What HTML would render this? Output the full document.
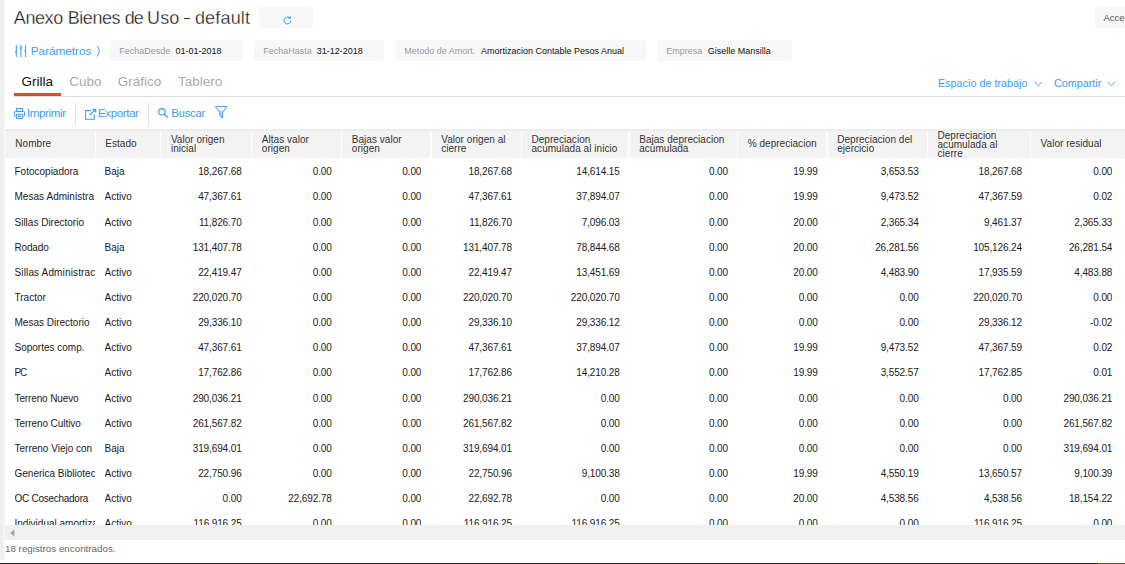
<!DOCTYPE html><html><head><meta charset="utf-8"><title>Anexo Bienes de Uso</title><style>
*{box-sizing:border-box;margin:0;padding:0}
html,body{width:1125px;height:564px;overflow:hidden;background:#fff}
body{font-family:"Liberation Sans",sans-serif;position:relative;color:#222}
.abs{position:absolute;white-space:nowrap}
.strip{left:0;top:0;width:5px;height:560px;background:#f4f4f4}
.strip2{left:0;top:0;width:2.5px;height:560px;background:#eeeeee}
.title{left:14px;top:7px;font-size:18px;line-height:22px;color:#111;-webkit-text-stroke:0.32px #fff}
.chip{background:#f8f8f8;border-radius:3px;top:40px;height:21px}
.lbl{font-size:9px;line-height:21px;top:40.5px;color:#999}
.val{font-size:9px;line-height:21px;top:40.5px;color:#111}
.blue{color:#3d9cf2}
.tab{font-size:13.5px;line-height:16px;top:74px;color:#aaa}
.hd{top:131px;height:27px;background:#f3f3f3}
.ht{font-size:10px;line-height:9px;color:#333;letter-spacing:0.04px}
.c{font-size:10px;line-height:25.2px;height:25.2px;color:#1a1a1a;letter-spacing:-0.12px;overflow:hidden}
.n{text-align:right}
.tb{font-size:11.5px;line-height:14px;top:105.8px;color:#3d9cf2;letter-spacing:-0.35px}
</style></head><body>
<div class="abs strip"></div><div class="abs strip2"></div>
<div class="abs" style="left:5px;top:129px;width:1px;height:396px;background:#f8f8f8"></div>
<div class="abs title" style="left:13.8px;letter-spacing:-0.4px">Anexo</div>
<div class="abs title" style="left:67.8px;letter-spacing:-0.47px">Bienes</div>
<div class="abs title" style="left:124.7px;letter-spacing:-1.0px">de</div>
<div class="abs title" style="left:147.1px;letter-spacing:0.1px">Uso</div>
<div class="abs title" style="left:194.9px;letter-spacing:0.18px">default</div>
<div class="abs" style="left:184.4px;top:17.9px;width:5.7px;height:1.3px;background:#3a3a3a"></div>
<div class="abs" style="left:259px;top:7.4px;width:54px;height:20.6px;background:#f8f8f8;border-radius:3px"></div>
<svg class="abs" style="left:283px;top:15.3px" width="10" height="10" viewBox="0 0 10 10"><path d="M6.6 2.9 A3.4 3.4 0 1 0 7.8 5.6" fill="none" stroke="#3d9cf2" stroke-width="1"/><path d="M4.9 3.6 L7.9 3.9 L7.6 0.6 Z" fill="#3d9cf2"/></svg>
<div class="abs" style="left:1095px;top:7px;width:40px;height:21px;background:#f8f8f8;border-radius:3px"></div>
<div class="abs" style="left:1103.5px;top:7px;font-size:9.5px;line-height:21px;color:#555">Acce</div>
<svg class="abs" style="left:15px;top:44.7px" width="12" height="12" viewBox="0 0 12 12" fill="none" stroke="#3d9cf2" stroke-width="1.1"><path d="M1.3 0V12M5.9 0V12M10.6 0V12" stroke-width="1"/><circle cx="1" cy="7" r="0.9" fill="#3d9cf2" stroke="none"/><circle cx="5.9" cy="3" r="1.1" fill="#3d9cf2" stroke="none"/><circle cx="10.2" cy="5.6" r="0.9" fill="#3d9cf2" stroke="none"/></svg>
<div class="abs blue" style="left:30.8px;top:43px;font-size:11.8px;line-height:16px;letter-spacing:-0.05px">Parámetros</div>
<svg class="abs" style="left:96px;top:45px" width="6" height="12" viewBox="0 0 6 12" fill="none" stroke="#3d9cf2" stroke-width="1"><path d="M1 0.8 Q5.4 6 1 11.4"/></svg>
<div class="abs chip" style="left:110px;width:133.3px"></div>
<div class="abs lbl" style="left:119.2px">FechaDesde</div>
<div class="abs val" style="left:175.5px">01-01-2018</div>
<div class="abs chip" style="left:254px;width:130px"></div>
<div class="abs lbl" style="left:263.2px">FechaHasta</div>
<div class="abs val" style="left:316.8px">31-12-2018</div>
<div class="abs chip" style="left:395px;width:251px"></div>
<div class="abs lbl" style="left:404.2px">Metodo de Amort.</div>
<div class="abs val" style="left:480.9px">Amortizacion Contable Pesos Anual</div>
<div class="abs chip" style="left:657px;width:135px"></div>
<div class="abs lbl" style="left:666.3px">Empresa</div>
<div class="abs val" style="left:707.7px">Giselle Mansilla</div>
<div class="abs tab" style="left:21.5px;color:#111">Grilla</div>
<div class="abs tab" style="left:69.3px">Cubo</div>
<div class="abs tab" style="left:117.8px">Gráfico</div>
<div class="abs tab" style="left:178px">Tablero</div>
<div class="abs" style="left:14px;top:96px;width:1111px;height:1px;background:#dcdcdc"></div>
<div class="abs" style="left:14px;top:93px;width:47px;height:3px;background:#e04a32"></div>
<div class="abs blue" style="left:938px;top:76px;font-size:10.8px;line-height:14px">Espacio de trabajo</div>
<svg class="abs" style="left:1034px;top:81px" width="9" height="6" viewBox="0 0 9 6" fill="none" stroke="#3d9cf2" stroke-width="0.9"><path d="M0.5 0.8 L4.3 4.8 L8.1 0.8"/></svg>
<div class="abs blue" style="left:1053.9px;top:76px;font-size:10.8px;line-height:14px">Compartir</div>
<svg class="abs" style="left:1107px;top:81px" width="9" height="6" viewBox="0 0 9 6" fill="none" stroke="#3d9cf2" stroke-width="0.9"><path d="M0.5 0.8 L4.3 4.8 L8.1 0.8"/></svg>
<svg class="abs" style="left:14px;top:108px" width="11" height="11" viewBox="0 0 11 11" fill="none" stroke="#3d9cf2" stroke-width="1"><rect x="2.5" y="0.5" width="6" height="3"/><rect x="0.5" y="3.3" width="10" height="4.9" rx="1"/><rect x="2.6" y="6.2" width="5.8" height="4.2" fill="#fff"/><rect x="4.1" y="7.6" width="2.8" height="1.5" fill="#3d9cf2" stroke="none"/></svg>
<div class="abs tb" style="left:27px">Imprimir</div>
<div class="abs" style="left:75px;top:103px;width:1px;height:22px;background:#e3e3e3"></div>
<svg class="abs" style="left:85px;top:107.7px" width="12" height="12" viewBox="0 0 12 12" fill="none" stroke="#3d9cf2" stroke-width="1.05"><path d="M5.8 2.6H0.55V11.3H9.3V6.2" stroke-linejoin="miter"/><path d="M4.8 7 L9.8 2" stroke-width="1.2"/><path d="M7 0.7H11.2V4.9Z" fill="#3d9cf2" stroke="none"/></svg>
<div class="abs tb" style="left:98px">Exportar</div>
<div class="abs" style="left:148px;top:103px;width:1px;height:22px;background:#e3e3e3"></div>
<svg class="abs" style="left:158px;top:108px" width="11" height="11" viewBox="0 0 11 11" fill="none" stroke="#3d9cf2" stroke-width="1.15"><circle cx="3.9" cy="3.8" r="3.15"/><path d="M6.2 6.1 L9.6 9.5" stroke-width="1.4"/></svg>
<div class="abs tb" style="left:171.3px">Buscar</div>
<svg class="abs" style="left:214px;top:106px" width="14" height="13" viewBox="0 0 14 13" fill="none" stroke="#3d9cf2" stroke-width="1"><path d="M4.4 4.6H9.8L8.6 6.3V12L5.7 9.6V6.3Z" fill="#b3d7f9" stroke="none"/><path d="M1.3 0.6H12.9L8.6 6.2V12L5.7 9.6V6.2Z" stroke-linejoin="round"/></svg>
<div class="abs" style="left:6px;top:129px;width:1119px;height:2px;background:#eaecee"></div>
<div class="abs" style="left:6px;top:130.5px;width:1119px;height:27.5px;background:#f3f3f3"></div>
<div class="abs" style="left:1121.5px;top:158px;width:4px;height:0.8px;background:#f3f3f3"></div>
<div class="abs ht" style="left:15.3px;top:129.5px;height:27.5px;display:flex;align-items:center"><div>Nombre</div></div>
<div class="abs" style="left:95.3px;top:131px;width:1.2px;height:27px;background:#fdfdfd"></div>
<div class="abs ht" style="left:105.3px;top:129.5px;height:27.5px;display:flex;align-items:center"><div>Estado</div></div>
<div class="abs" style="left:160.10000000000002px;top:131px;width:1.2px;height:27px;background:#fdfdfd"></div>
<div class="abs ht" style="left:170.90000000000003px;top:130.4px;height:27.5px;display:flex;align-items:center"><div>Valor origen<br>inicial</div></div>
<div class="abs" style="left:251.0px;top:131px;width:1.2px;height:27px;background:#fdfdfd"></div>
<div class="abs ht" style="left:261.8px;top:130.4px;height:27.5px;display:flex;align-items:center"><div>Altas valor<br>origen</div></div>
<div class="abs" style="left:341.0px;top:131px;width:1.2px;height:27px;background:#fdfdfd"></div>
<div class="abs ht" style="left:351.8px;top:130.4px;height:27.5px;display:flex;align-items:center"><div>Bajas valor<br>origen</div></div>
<div class="abs" style="left:430.40000000000003px;top:131px;width:1.2px;height:27px;background:#fdfdfd"></div>
<div class="abs ht" style="left:441.20000000000005px;top:130.4px;height:27.5px;display:flex;align-items:center"><div>Valor origen al<br>cierre</div></div>
<div class="abs" style="left:520.6999999999999px;top:131px;width:1.2px;height:27px;background:#fdfdfd"></div>
<div class="abs ht" style="left:531.4999999999999px;top:130.4px;height:27.5px;display:flex;align-items:center"><div>Depreciacion<br>acumulada al inicio</div></div>
<div class="abs" style="left:628.4px;top:131px;width:1.2px;height:27px;background:#fdfdfd"></div>
<div class="abs ht" style="left:639.1999999999999px;top:130.4px;height:27.5px;display:flex;align-items:center"><div>Bajas depreciacion<br>acumulada</div></div>
<div class="abs" style="left:736.9px;top:131px;width:1.2px;height:27px;background:#fdfdfd"></div>
<div class="abs ht" style="left:747.6999999999999px;top:129.5px;height:27.5px;display:flex;align-items:center"><div>% depreciacion</div></div>
<div class="abs" style="left:826.4px;top:131px;width:1.2px;height:27px;background:#fdfdfd"></div>
<div class="abs ht" style="left:837.1999999999999px;top:130.4px;height:27.5px;display:flex;align-items:center"><div>Depreciacion del<br>ejercicio</div></div>
<div class="abs" style="left:926.6999999999999px;top:131px;width:1.2px;height:27px;background:#fdfdfd"></div>
<div class="abs ht" style="left:937.4999999999999px;top:130.4px;height:27.5px;display:flex;align-items:center"><div>Depreciacion<br>acumulada al<br>cierre</div></div>
<div class="abs" style="left:1029.8px;top:131px;width:1.2px;height:27px;background:#fdfdfd"></div>
<div class="abs ht" style="left:1040.6px;top:129.5px;height:27.5px;display:flex;align-items:center"><div>Valor residual</div></div>
<div class="abs" style="left:6px;top:159.2px;width:1119px;height:365.8px;overflow:hidden">
<div class="abs c" style="letter-spacing:0px;left:8.5px;top:0.00px;width:80.1px">Fotocopiadora</div>
<div class="abs c" style="letter-spacing:0px;left:98.5px;top:0.00px;width:54.90000000000001px">Baja</div>
<div class="abs c n" style="left:154.8px;top:0.00px;width:80.8px">18,267.68</div>
<div class="abs c n" style="left:245.7px;top:0.00px;width:80.0px">0.00</div>
<div class="abs c n" style="left:335.7px;top:0.00px;width:79.6px">0.00</div>
<div class="abs c n" style="left:425.1px;top:0.00px;width:80.8px">18,267.68</div>
<div class="abs c n" style="left:515.4px;top:0.00px;width:98.3px">14,614.15</div>
<div class="abs c n" style="left:623.1px;top:0.00px;width:98.8px">0.00</div>
<div class="abs c n" style="left:731.6px;top:0.00px;width:80.1px">19.99</div>
<div class="abs c n" style="left:821.1px;top:0.00px;width:91.5px">3,653.53</div>
<div class="abs c n" style="left:921.4px;top:0.00px;width:94.6px">18,267.68</div>
<div class="abs c n" style="left:1024.5px;top:0.00px;width:81.8px">0.00</div>
<div class="abs c" style="letter-spacing:0.04px;left:8.5px;top:25.16px;width:80.1px">Mesas Administra</div>
<div class="abs c" style="letter-spacing:0px;left:98.5px;top:25.16px;width:54.90000000000001px">Activo</div>
<div class="abs c n" style="left:154.8px;top:25.16px;width:80.8px">47,367.61</div>
<div class="abs c n" style="left:245.7px;top:25.16px;width:80.0px">0.00</div>
<div class="abs c n" style="left:335.7px;top:25.16px;width:79.6px">0.00</div>
<div class="abs c n" style="left:425.1px;top:25.16px;width:80.8px">47,367.61</div>
<div class="abs c n" style="left:515.4px;top:25.16px;width:98.3px">37,894.07</div>
<div class="abs c n" style="left:623.1px;top:25.16px;width:98.8px">0.00</div>
<div class="abs c n" style="left:731.6px;top:25.16px;width:80.1px">19.99</div>
<div class="abs c n" style="left:821.1px;top:25.16px;width:91.5px">9,473.52</div>
<div class="abs c n" style="left:921.4px;top:25.16px;width:94.6px">47,367.59</div>
<div class="abs c n" style="left:1024.5px;top:25.16px;width:81.8px">0.02</div>
<div class="abs c" style="letter-spacing:0px;left:8.5px;top:50.32px;width:80.1px">Sillas Directorio</div>
<div class="abs c" style="letter-spacing:0px;left:98.5px;top:50.32px;width:54.90000000000001px">Activo</div>
<div class="abs c n" style="left:154.8px;top:50.32px;width:80.8px">11,826.70</div>
<div class="abs c n" style="left:245.7px;top:50.32px;width:80.0px">0.00</div>
<div class="abs c n" style="left:335.7px;top:50.32px;width:79.6px">0.00</div>
<div class="abs c n" style="left:425.1px;top:50.32px;width:80.8px">11,826.70</div>
<div class="abs c n" style="left:515.4px;top:50.32px;width:98.3px">7,096.03</div>
<div class="abs c n" style="left:623.1px;top:50.32px;width:98.8px">0.00</div>
<div class="abs c n" style="left:731.6px;top:50.32px;width:80.1px">20.00</div>
<div class="abs c n" style="left:821.1px;top:50.32px;width:91.5px">2,365.34</div>
<div class="abs c n" style="left:921.4px;top:50.32px;width:94.6px">9,461.37</div>
<div class="abs c n" style="left:1024.5px;top:50.32px;width:81.8px">2,365.33</div>
<div class="abs c" style="letter-spacing:-0.16px;left:8.5px;top:75.48px;width:80.1px">Rodado</div>
<div class="abs c" style="letter-spacing:0px;left:98.5px;top:75.48px;width:54.90000000000001px">Baja</div>
<div class="abs c n" style="left:154.8px;top:75.48px;width:80.8px">131,407.78</div>
<div class="abs c n" style="left:245.7px;top:75.48px;width:80.0px">0.00</div>
<div class="abs c n" style="left:335.7px;top:75.48px;width:79.6px">0.00</div>
<div class="abs c n" style="left:425.1px;top:75.48px;width:80.8px">131,407.78</div>
<div class="abs c n" style="left:515.4px;top:75.48px;width:98.3px">78,844.68</div>
<div class="abs c n" style="left:623.1px;top:75.48px;width:98.8px">0.00</div>
<div class="abs c n" style="left:731.6px;top:75.48px;width:80.1px">20.00</div>
<div class="abs c n" style="left:821.1px;top:75.48px;width:91.5px">26,281.56</div>
<div class="abs c n" style="left:921.4px;top:75.48px;width:94.6px">105,126.24</div>
<div class="abs c n" style="left:1024.5px;top:75.48px;width:81.8px">26,281.54</div>
<div class="abs c" style="letter-spacing:0.14px;left:8.5px;top:100.64px;width:80.1px">Sillas Administrac</div>
<div class="abs c" style="letter-spacing:0px;left:98.5px;top:100.64px;width:54.90000000000001px">Activo</div>
<div class="abs c n" style="left:154.8px;top:100.64px;width:80.8px">22,419.47</div>
<div class="abs c n" style="left:245.7px;top:100.64px;width:80.0px">0.00</div>
<div class="abs c n" style="left:335.7px;top:100.64px;width:79.6px">0.00</div>
<div class="abs c n" style="left:425.1px;top:100.64px;width:80.8px">22,419.47</div>
<div class="abs c n" style="left:515.4px;top:100.64px;width:98.3px">13,451.69</div>
<div class="abs c n" style="left:623.1px;top:100.64px;width:98.8px">0.00</div>
<div class="abs c n" style="left:731.6px;top:100.64px;width:80.1px">20.00</div>
<div class="abs c n" style="left:821.1px;top:100.64px;width:91.5px">4,483.90</div>
<div class="abs c n" style="left:921.4px;top:100.64px;width:94.6px">17,935.59</div>
<div class="abs c n" style="left:1024.5px;top:100.64px;width:81.8px">4,483.88</div>
<div class="abs c" style="letter-spacing:0px;left:8.5px;top:125.80px;width:80.1px">Tractor</div>
<div class="abs c" style="letter-spacing:0px;left:98.5px;top:125.80px;width:54.90000000000001px">Activo</div>
<div class="abs c n" style="left:154.8px;top:125.80px;width:80.8px">220,020.70</div>
<div class="abs c n" style="left:245.7px;top:125.80px;width:80.0px">0.00</div>
<div class="abs c n" style="left:335.7px;top:125.80px;width:79.6px">0.00</div>
<div class="abs c n" style="left:425.1px;top:125.80px;width:80.8px">220,020.70</div>
<div class="abs c n" style="left:515.4px;top:125.80px;width:98.3px">220,020.70</div>
<div class="abs c n" style="left:623.1px;top:125.80px;width:98.8px">0.00</div>
<div class="abs c n" style="left:731.6px;top:125.80px;width:80.1px">0.00</div>
<div class="abs c n" style="left:821.1px;top:125.80px;width:91.5px">0.00</div>
<div class="abs c n" style="left:921.4px;top:125.80px;width:94.6px">220,020.70</div>
<div class="abs c n" style="left:1024.5px;top:125.80px;width:81.8px">0.00</div>
<div class="abs c" style="letter-spacing:0px;left:8.5px;top:150.96px;width:80.1px">Mesas Directorio</div>
<div class="abs c" style="letter-spacing:0px;left:98.5px;top:150.96px;width:54.90000000000001px">Activo</div>
<div class="abs c n" style="left:154.8px;top:150.96px;width:80.8px">29,336.10</div>
<div class="abs c n" style="left:245.7px;top:150.96px;width:80.0px">0.00</div>
<div class="abs c n" style="left:335.7px;top:150.96px;width:79.6px">0.00</div>
<div class="abs c n" style="left:425.1px;top:150.96px;width:80.8px">29,336.10</div>
<div class="abs c n" style="left:515.4px;top:150.96px;width:98.3px">29,336.12</div>
<div class="abs c n" style="left:623.1px;top:150.96px;width:98.8px">0.00</div>
<div class="abs c n" style="left:731.6px;top:150.96px;width:80.1px">0.00</div>
<div class="abs c n" style="left:821.1px;top:150.96px;width:91.5px">0.00</div>
<div class="abs c n" style="left:921.4px;top:150.96px;width:94.6px">29,336.12</div>
<div class="abs c n" style="left:1024.5px;top:150.96px;width:81.8px">-0.02</div>
<div class="abs c" style="letter-spacing:0px;left:8.5px;top:176.12px;width:80.1px">Soportes comp.</div>
<div class="abs c" style="letter-spacing:0px;left:98.5px;top:176.12px;width:54.90000000000001px">Activo</div>
<div class="abs c n" style="left:154.8px;top:176.12px;width:80.8px">47,367.61</div>
<div class="abs c n" style="left:245.7px;top:176.12px;width:80.0px">0.00</div>
<div class="abs c n" style="left:335.7px;top:176.12px;width:79.6px">0.00</div>
<div class="abs c n" style="left:425.1px;top:176.12px;width:80.8px">47,367.61</div>
<div class="abs c n" style="left:515.4px;top:176.12px;width:98.3px">37,894.07</div>
<div class="abs c n" style="left:623.1px;top:176.12px;width:98.8px">0.00</div>
<div class="abs c n" style="left:731.6px;top:176.12px;width:80.1px">19.99</div>
<div class="abs c n" style="left:821.1px;top:176.12px;width:91.5px">9,473.52</div>
<div class="abs c n" style="left:921.4px;top:176.12px;width:94.6px">47,367.59</div>
<div class="abs c n" style="left:1024.5px;top:176.12px;width:81.8px">0.02</div>
<div class="abs c" style="letter-spacing:-1.2px;left:8.5px;top:201.28px;width:80.1px">PC</div>
<div class="abs c" style="letter-spacing:0px;left:98.5px;top:201.28px;width:54.90000000000001px">Activo</div>
<div class="abs c n" style="left:154.8px;top:201.28px;width:80.8px">17,762.86</div>
<div class="abs c n" style="left:245.7px;top:201.28px;width:80.0px">0.00</div>
<div class="abs c n" style="left:335.7px;top:201.28px;width:79.6px">0.00</div>
<div class="abs c n" style="left:425.1px;top:201.28px;width:80.8px">17,762.86</div>
<div class="abs c n" style="left:515.4px;top:201.28px;width:98.3px">14,210.28</div>
<div class="abs c n" style="left:623.1px;top:201.28px;width:98.8px">0.00</div>
<div class="abs c n" style="left:731.6px;top:201.28px;width:80.1px">19.99</div>
<div class="abs c n" style="left:821.1px;top:201.28px;width:91.5px">3,552.57</div>
<div class="abs c n" style="left:921.4px;top:201.28px;width:94.6px">17,762.85</div>
<div class="abs c n" style="left:1024.5px;top:201.28px;width:81.8px">0.01</div>
<div class="abs c" style="letter-spacing:-0.12px;left:8.5px;top:226.44px;width:80.1px">Terreno Nuevo</div>
<div class="abs c" style="letter-spacing:0px;left:98.5px;top:226.44px;width:54.90000000000001px">Activo</div>
<div class="abs c n" style="left:154.8px;top:226.44px;width:80.8px">290,036.21</div>
<div class="abs c n" style="left:245.7px;top:226.44px;width:80.0px">0.00</div>
<div class="abs c n" style="left:335.7px;top:226.44px;width:79.6px">0.00</div>
<div class="abs c n" style="left:425.1px;top:226.44px;width:80.8px">290,036.21</div>
<div class="abs c n" style="left:515.4px;top:226.44px;width:98.3px">0.00</div>
<div class="abs c n" style="left:623.1px;top:226.44px;width:98.8px">0.00</div>
<div class="abs c n" style="left:731.6px;top:226.44px;width:80.1px">0.00</div>
<div class="abs c n" style="left:821.1px;top:226.44px;width:91.5px">0.00</div>
<div class="abs c n" style="left:921.4px;top:226.44px;width:94.6px">0.00</div>
<div class="abs c n" style="left:1024.5px;top:226.44px;width:81.8px">290,036.21</div>
<div class="abs c" style="letter-spacing:-0.07px;left:8.5px;top:251.60px;width:80.1px">Terreno Cultivo</div>
<div class="abs c" style="letter-spacing:0px;left:98.5px;top:251.60px;width:54.90000000000001px">Activo</div>
<div class="abs c n" style="left:154.8px;top:251.60px;width:80.8px">261,567.82</div>
<div class="abs c n" style="left:245.7px;top:251.60px;width:80.0px">0.00</div>
<div class="abs c n" style="left:335.7px;top:251.60px;width:79.6px">0.00</div>
<div class="abs c n" style="left:425.1px;top:251.60px;width:80.8px">261,567.82</div>
<div class="abs c n" style="left:515.4px;top:251.60px;width:98.3px">0.00</div>
<div class="abs c n" style="left:623.1px;top:251.60px;width:98.8px">0.00</div>
<div class="abs c n" style="left:731.6px;top:251.60px;width:80.1px">0.00</div>
<div class="abs c n" style="left:821.1px;top:251.60px;width:91.5px">0.00</div>
<div class="abs c n" style="left:921.4px;top:251.60px;width:94.6px">0.00</div>
<div class="abs c n" style="left:1024.5px;top:251.60px;width:81.8px">261,567.82</div>
<div class="abs c" style="letter-spacing:0px;left:8.5px;top:276.76px;width:80.1px">Terreno Viejo con c</div>
<div class="abs c" style="letter-spacing:0px;left:98.5px;top:276.76px;width:54.90000000000001px">Baja</div>
<div class="abs c n" style="left:154.8px;top:276.76px;width:80.8px">319,694.01</div>
<div class="abs c n" style="left:245.7px;top:276.76px;width:80.0px">0.00</div>
<div class="abs c n" style="left:335.7px;top:276.76px;width:79.6px">0.00</div>
<div class="abs c n" style="left:425.1px;top:276.76px;width:80.8px">319,694.01</div>
<div class="abs c n" style="left:515.4px;top:276.76px;width:98.3px">0.00</div>
<div class="abs c n" style="left:623.1px;top:276.76px;width:98.8px">0.00</div>
<div class="abs c n" style="left:731.6px;top:276.76px;width:80.1px">0.00</div>
<div class="abs c n" style="left:821.1px;top:276.76px;width:91.5px">0.00</div>
<div class="abs c n" style="left:921.4px;top:276.76px;width:94.6px">0.00</div>
<div class="abs c n" style="left:1024.5px;top:276.76px;width:81.8px">319,694.01</div>
<div class="abs c" style="letter-spacing:0px;left:8.5px;top:301.92px;width:80.1px">Generica Biblioteca</div>
<div class="abs c" style="letter-spacing:0px;left:98.5px;top:301.92px;width:54.90000000000001px">Activo</div>
<div class="abs c n" style="left:154.8px;top:301.92px;width:80.8px">22,750.96</div>
<div class="abs c n" style="left:245.7px;top:301.92px;width:80.0px">0.00</div>
<div class="abs c n" style="left:335.7px;top:301.92px;width:79.6px">0.00</div>
<div class="abs c n" style="left:425.1px;top:301.92px;width:80.8px">22,750.96</div>
<div class="abs c n" style="left:515.4px;top:301.92px;width:98.3px">9,100.38</div>
<div class="abs c n" style="left:623.1px;top:301.92px;width:98.8px">0.00</div>
<div class="abs c n" style="left:731.6px;top:301.92px;width:80.1px">19.99</div>
<div class="abs c n" style="left:821.1px;top:301.92px;width:91.5px">4,550.19</div>
<div class="abs c n" style="left:921.4px;top:301.92px;width:94.6px">13,650.57</div>
<div class="abs c n" style="left:1024.5px;top:301.92px;width:81.8px">9,100.39</div>
<div class="abs c" style="letter-spacing:-0.27px;left:8.5px;top:327.08px;width:80.1px">OC Cosechadora</div>
<div class="abs c" style="letter-spacing:0px;left:98.5px;top:327.08px;width:54.90000000000001px">Activo</div>
<div class="abs c n" style="left:154.8px;top:327.08px;width:80.8px">0.00</div>
<div class="abs c n" style="left:245.7px;top:327.08px;width:80.0px">22,692.78</div>
<div class="abs c n" style="left:335.7px;top:327.08px;width:79.6px">0.00</div>
<div class="abs c n" style="left:425.1px;top:327.08px;width:80.8px">22,692.78</div>
<div class="abs c n" style="left:515.4px;top:327.08px;width:98.3px">0.00</div>
<div class="abs c n" style="left:623.1px;top:327.08px;width:98.8px">0.00</div>
<div class="abs c n" style="left:731.6px;top:327.08px;width:80.1px">20.00</div>
<div class="abs c n" style="left:821.1px;top:327.08px;width:91.5px">4,538.56</div>
<div class="abs c n" style="left:921.4px;top:327.08px;width:94.6px">4,538.56</div>
<div class="abs c n" style="left:1024.5px;top:327.08px;width:81.8px">18,154.22</div>
<div class="abs c" style="letter-spacing:0px;left:8.5px;top:352.24px;width:80.1px">Individual amortiza</div>
<div class="abs c" style="letter-spacing:0px;left:98.5px;top:352.24px;width:54.90000000000001px">Activo</div>
<div class="abs c n" style="left:154.8px;top:352.24px;width:80.8px">116,916.25</div>
<div class="abs c n" style="left:245.7px;top:352.24px;width:80.0px">0.00</div>
<div class="abs c n" style="left:335.7px;top:352.24px;width:79.6px">0.00</div>
<div class="abs c n" style="left:425.1px;top:352.24px;width:80.8px">116,916.25</div>
<div class="abs c n" style="left:515.4px;top:352.24px;width:98.3px">116,916.25</div>
<div class="abs c n" style="left:623.1px;top:352.24px;width:98.8px">0.00</div>
<div class="abs c n" style="left:731.6px;top:352.24px;width:80.1px">0.00</div>
<div class="abs c n" style="left:821.1px;top:352.24px;width:91.5px">0.00</div>
<div class="abs c n" style="left:921.4px;top:352.24px;width:94.6px">116,916.25</div>
<div class="abs c n" style="left:1024.5px;top:352.24px;width:81.8px">0.00</div>
</div>
<div class="abs" style="left:5px;top:525px;width:1120px;height:15px;background:#f0f0f0"></div>
<svg class="abs" style="left:9.6px;top:528.6px" width="5" height="8" viewBox="0 0 5 8"><path d="M4.4 0.3V7.7L0.3 4Z" fill="#a3a3a3"/></svg>
<div class="abs" style="left:5px;top:542px;font-size:9.8px;line-height:14px;color:#666">18 registros encontrados.</div>
<div class="abs" style="left:0;top:562.9px;width:1125px;height:2px;background:#262626"></div>
<div class="abs" style="left:1098px;top:562.9px;width:27px;height:2px;background:#4b6b20"></div>
</body></html>
